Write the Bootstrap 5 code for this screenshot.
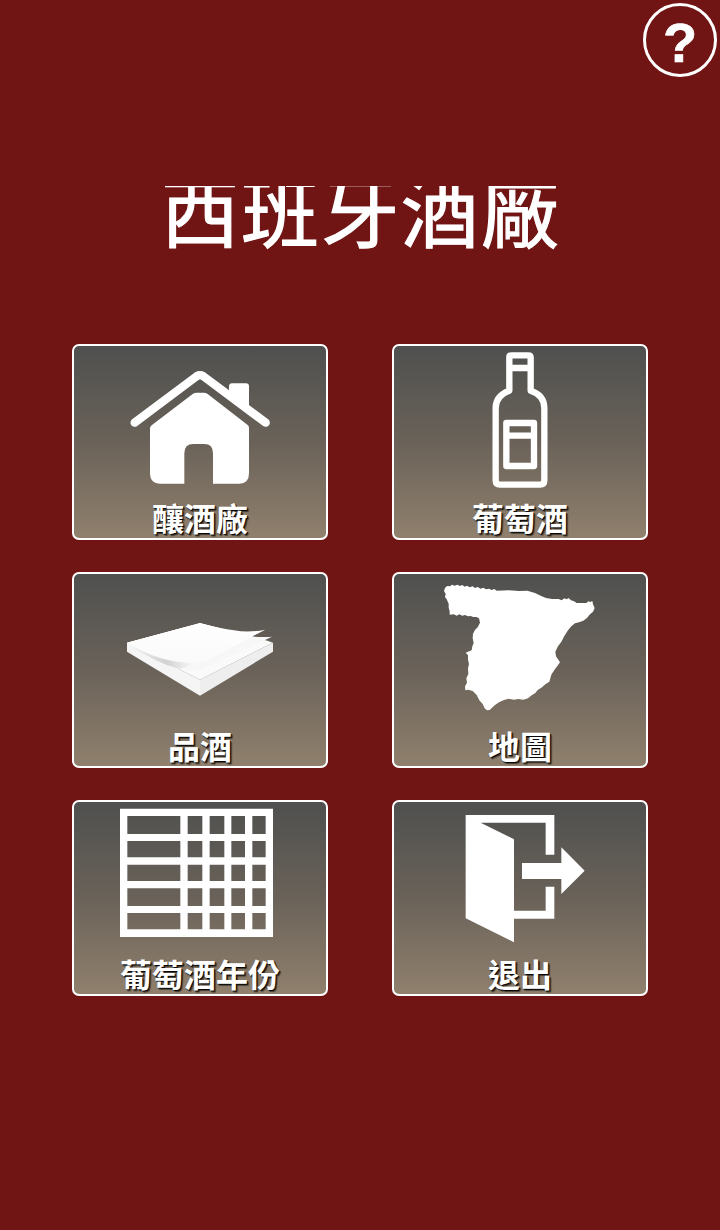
<!DOCTYPE html>
<html lang="zh-Hant">
<head>
<meta charset="utf-8">
<meta name="viewport" content="width=device-width, initial-scale=1">
<title>西班牙酒廠</title>
<link href="https://cdn.jsdelivr.net/npm/bootstrap@5.3.0/dist/css/bootstrap.min.css" rel="stylesheet">
<style>
  body { background: #701414; font-family: "Noto Sans CJK TC", sans-serif; min-height: 1230px; }
  .help-btn { width: 74px; height: 74px; margin: 3px 3px 0 0; padding-top: 6px; border: 3px solid #fff; font: bold 56px/68px "Liberation Sans", sans-serif; -webkit-text-stroke: .6px #fff; }
  .app-title { font-size: 78px; letter-spacing: 2px; text-indent: 2px; line-height: 44px; height: 70px; margin-top: 109px; font-weight: 400; -webkit-text-stroke: 1.2px #fff; }
  .menu-grid { display: grid; grid-template-columns: 256px 256px; gap: 32px 64px; margin-top: 88px; }
  .tile { height: 196px; border: 2px solid #fff; border-radius: 7px; background: linear-gradient(#4f504f, #6a6259 50%, #90806d); }
  .tile svg { width: 252px; height: 153px; fill: #fff; }
  .tile-label { font-size: 32px; line-height: 36px; font-weight: 700; text-shadow: 1px 1px 1px #000, 2px 2px 1px #0007; }
</style>
</head>
<body class="text-white d-flex flex-column overflow-hidden">
<header class="d-flex justify-content-end">
  <a href="#" class="help-btn rounded-circle d-flex align-items-center justify-content-center text-white text-decoration-none">?</a>
</header>
<h1 class="app-title text-center overflow-hidden mb-0">西班牙酒廠</h1>
<main class="menu-grid justify-content-center">
  <a href="#" class="tile d-flex flex-column text-white text-decoration-none text-center">
    <svg viewBox="30 30 756 459">
      <path d="M212 260 399 120Q408 115 417 120L605 260" fill="none" stroke="#fff" stroke-width="25" stroke-linecap="round" stroke-linejoin="round"/>
      <path d="M495 165V151Q495 142 504 142H546Q555 142 555 151V215ZM258 277Q258 272 263 268L386 174Q392 170 398 170H419Q425 170 431 174L551 267Q555 270 555 276V412Q555 443 526 443H447V352Q447 324 421 324H388Q361 324 361 352V443H290Q258 443 258 410Z"/>
    </svg>
    <span class="tile-label">釀酒廠</span>
  </a>
  <a href="#" class="tile d-flex flex-column text-white text-decoration-none text-center">
    <svg viewBox="30 30 756 459">
      <g fill="none" stroke="#fff" stroke-width="19" stroke-linejoin="round">
        <path d="M376 164V64Q376 58 383 58H433Q440 58 440 64V164Q481 177 481 216V433Q481 446 468 446H348Q335 446 335 433V216Q335 179 376 164ZM376 96H440"/>
        <path d="M367 261H450V390H367ZM367 299H450"/>
      </g>
    </svg>
    <span class="tile-label">葡萄酒</span>
  </a>
  <a href="#" class="tile d-flex flex-column text-white text-decoration-none text-center">
    <svg viewBox="30 30 756 459">
      <defs>
        <linearGradient id="sheetShade" x1="0" y1="0" x2="0" y2="1"><stop offset="0" stop-color="#fff"/><stop offset="1" stop-color="#fafafa"/></linearGradient>
        <linearGradient id="curlShade" x1="0" y1="0" x2="1" y2="0"><stop offset="0" stop-color="#f2f2f2"/><stop offset=".6" stop-color="#d2d2d2"/><stop offset="1" stop-color="#f7f7f7"/></linearGradient>
      </defs>
      <path fill="#f5f5f5" d="M189 236 408 347V395L189 263Z"/>
      <path fill="#eeeeee" d="M408 347 627 236V263L408 395Z"/>
      <path fill="#fafafa" d="M189 236 408 178 610 230 627 236 408 347Z"/>
      <path fill="#f7f7f7" d="M189 236 Q310 325 408 320L624 218Q590 222 550 213L408 178Z"/>
      <path fill="url(#curlShade)" d="M189 236Q270 296 345 314Q370 310 386 297 Q280 294 189 236Z"/>
      <path fill="url(#sheetShade)" d="M189 236 408 177Q470 194 510 199Q555 207 605 197L425 290Q405 300 350 293Q275 285 189 236Z"/>
      <path fill="#625c54" d="M566 217 605 197 610 219Q590 220 566 217Z"/>
    </svg>
    <span class="tile-label">品酒</span>
  </a>
  <a href="#" class="tile d-flex flex-column text-white text-decoration-none text-center">
    <svg viewBox="30 30 756 459">
      <path d="M183 72 189 66 198 67 204 62 212 65 220 62 228 66 235 63 242 68 249 65 257 70 266 67 273 72 281 69 290 74 298 71 306 76 315 74 323 78 331 75 338 80 375 79 405 81 430 80 453 87 470 95 486 102 504 105 524 105 533 109 541 103 548 106 554 102 561 109 570 112 578 117 608 117 612 112 619 114 625 111 627 121 632 132 627 143 618 151 609 162 598 170 585 175 573 178 562 187 552 199 541 216 532 233 521 248 514 263 516 277 522 286 528 295 520 306 511 318 502 332 496 353 484 361 472 371 461 378 454 387 443 394 432 403 418 407 403 405 390 407 374 404 360 408 345 415 333 423 324 431 317 438 309 439 302 433 296 420 286 409 278 393 266 381 253 377 244 379 243 367 249 356 247 343 253 330 252 313 255 300 252 287 252 274 245 266 263 259 265 247 269 237 266 223 267 209 273 198 281 190 288 176 285 163 277 159 268 159 260 156 252 157 243 153 235 155 226 151 218 155 210 151 197 152 197 142 194 131 194 119 188 106 183 99 185 90 180 81Z"/>
    </svg>
    <span class="tile-label">地圖</span>
  </a>
  <a href="#" class="tile d-flex flex-column text-white text-decoration-none text-center">
    <svg viewBox="30 30 756 459">
      <path fill-rule="evenodd" d="M168 50H627V435H168ZM190 72V126H349V72ZM371 72V126H415V72ZM437 72V126H481V72ZM502 72V126H543V72ZM565 72V126H605V72ZM190 147V196H349V147ZM371 147V196H415V147ZM437 147V196H481V147ZM502 147V196H543V147ZM565 147V196H605V147ZM190 218V267H349V218ZM371 218V267H415V218ZM437 218V267H481V218ZM502 218V267H543V218ZM565 218V267H605V218ZM190 289V342H349V289ZM371 289V342H415V289ZM437 289V342H481V289ZM502 289V342H543V289ZM565 289V342H605V289ZM190 363V412H349V363ZM371 363V412H415V363ZM437 363V412H481V363ZM502 363V412H543V363ZM565 363V412H605V363Z"/>
    </svg>
    <span class="tile-label">葡萄酒年份</span>
  </a>
  <a href="#" class="tile d-flex flex-column text-white text-decoration-none text-center">
    <svg viewBox="30 30 756 459">
      <path d="M245 69H511V188H485V92H290L390 142V356H485V284H511V380H390V451L245 379Z"/>
      <path d="M414 213H532V166L602 236 532 306V261H414Z"/>
    </svg>
    <span class="tile-label">退出</span>
  </a>
</main>
<script src="https://cdn.jsdelivr.net/npm/bootstrap@5.3.0/dist/js/bootstrap.bundle.min.js"></script>
</body>
</html>
